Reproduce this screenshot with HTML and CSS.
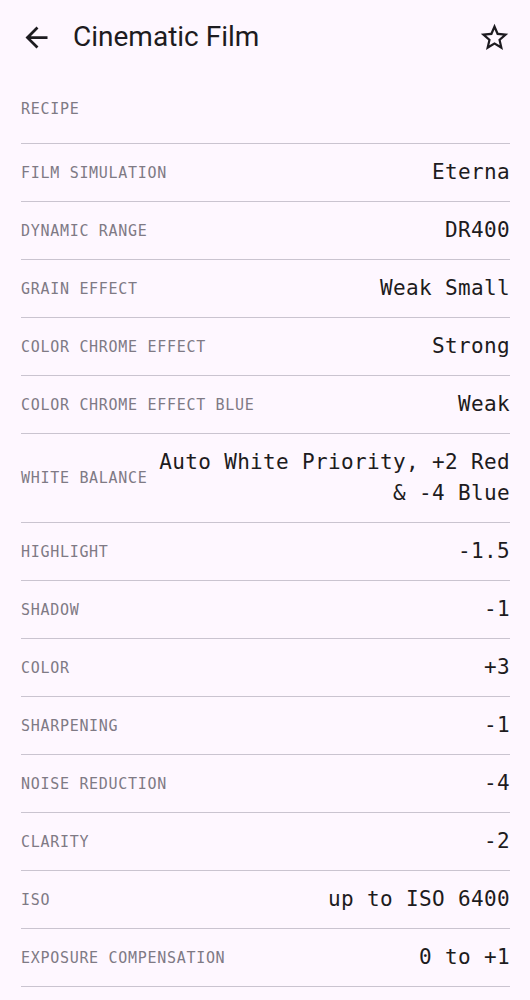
FILE: index.html
```html
<!DOCTYPE html>
<html lang="en">
<head>
<meta charset="utf-8">
<title>Cinematic Film</title>
<link rel="stylesheet" href="styles.css">
</head>
<body>
<div class="screen">
  <header class="topbar">
    <button class="icon-btn" aria-label="Back">
      <svg viewBox="0 0 24 24" width="33" height="33"><path d="M20 11H7.83l5.59-5.59L12 4l-8 8 8 8 1.41-1.41L7.83 13H20v-2z"/></svg>
    </button>
    <h1 class="title">Cinematic Film</h1>
    <button class="icon-btn star" aria-label="Favorite">
      <svg viewBox="0 0 24 24" width="33" height="33"><path d="M22 9.24l-7.19-.62L12 2 9.19 8.63 2 9.240l5.46 4.73L5.82 21 12 17.270 18.18 21l-1.63-7.03L22 9.24zM12 15.4l-3.76 2.27 1-4.28-3.32-2.88 4.38-.38L12 6.1l1.71 4.04 4.38.38-3.32 2.88 1 4.28L12 15.4z"/></svg>
    </button>
  </header>
  <main class="content">
    <div class="section-head">RECIPE</div>
    <div class="row"><span class="label">FILM SIMULATION</span><span class="value">Eterna</span></div>
    <div class="row"><span class="label">DYNAMIC RANGE</span><span class="value">DR400</span></div>
    <div class="row"><span class="label">GRAIN EFFECT</span><span class="value">Weak Small</span></div>
    <div class="row"><span class="label">COLOR CHROME EFFECT</span><span class="value">Strong</span></div>
    <div class="row"><span class="label">COLOR CHROME EFFECT BLUE</span><span class="value">Weak</span></div>
    <div class="row"><span class="label">WHITE BALANCE</span><span class="value">Auto White Priority, +2 Red &amp; -4 Blue</span></div>
    <div class="row"><span class="label">HIGHLIGHT</span><span class="value">-1.5</span></div>
    <div class="row"><span class="label">SHADOW</span><span class="value">-1</span></div>
    <div class="row"><span class="label">COLOR</span><span class="value">+3</span></div>
    <div class="row"><span class="label">SHARPENING</span><span class="value">-1</span></div>
    <div class="row"><span class="label">NOISE REDUCTION</span><span class="value">-4</span></div>
    <div class="row"><span class="label">CLARITY</span><span class="value">-2</span></div>
    <div class="row"><span class="label">ISO</span><span class="value">up to ISO 6400</span></div>
    <div class="row"><span class="label">EXPOSURE COMPENSATION</span><span class="value">0 to +1</span></div>
  </main>
</div>
</body>
</html>
```

FILE: styles.css
```css
* { box-sizing: border-box; }
html, body {
  margin: 0;
  padding: 0;
  background: #fef7ff;
}
body {
  font-family: Roboto, "Noto Sans", sans-serif;
  color: #1d1b20;
}
.screen {
  width: 530px;
  min-height: 1000px;
  background: #fef7ff;
}
.topbar {
  height: 74px;
  display: flex;
  align-items: center;
  padding: 0 8px 0 20px;
}
.icon-btn {
  border: 0;
  background: none;
  padding: 0;
  width: 33px;
  height: 33px;
  display: flex;
  align-items: center;
  justify-content: center;
  color: #1d1b20;
}
.icon-btn svg { fill: currentColor; display: block; }
.star { margin-left: auto; margin-right: 11px; }
.title {
  margin: 0 0 0 20px;
  font-family: Roboto, sans-serif;
  font-weight: 400;
  font-size: 28px;
  line-height: 36px;
  color: #1d1b20;
}
.content {
  padding: 0 20px 0 21px;
}
.section-head {
  font-family: "DejaVu Sans Mono", monospace;
  font-size: 15px;
  letter-spacing: 0.7px;
  color: #7f7a85;
  padding: 24px 0 23px;
  line-height: 22px;
  border-bottom: 1px solid #cac4d0;
  height: 70px;
}
.row {
  display: flex;
  align-items: center;
  gap: 8px;
  padding: 13px 0;
  border-bottom: 1px solid #cac4d0;
  min-height: 58px;
}
.label {
  flex-shrink: 0;
  font-family: "DejaVu Sans Mono", monospace;
  font-size: 15px;
  letter-spacing: 0.7px;
  color: #7f7a85;
  line-height: 20px;
}
.value {
  flex: 1;
  text-align: right;
  font-family: "DejaVu Sans Mono", monospace;
  font-size: 21px;
  letter-spacing: 0.35px;
  line-height: 31px;
  color: #1d1b20;
}
```
